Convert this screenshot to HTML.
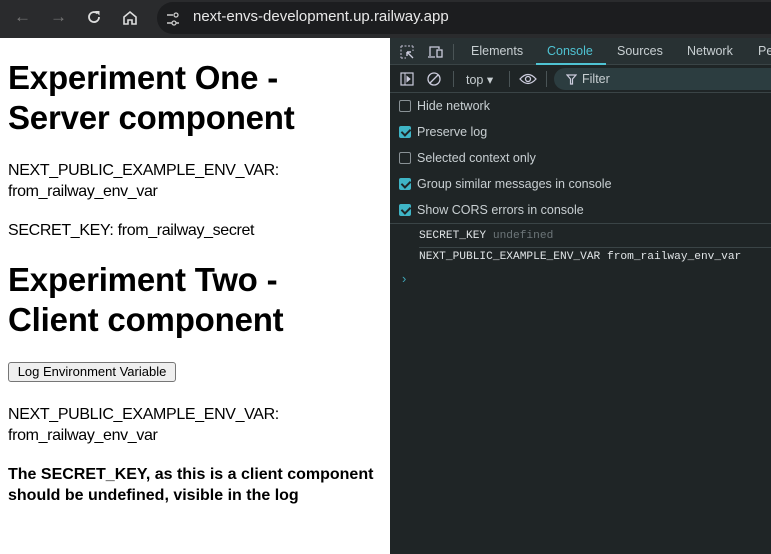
<!DOCTYPE html><html><head><style>
*{margin:0;padding:0;box-sizing:border-box}
body{width:771px;height:554px;overflow:hidden;background:#fff;font-family:"Liberation Sans",sans-serif;position:relative}
.a{position:absolute;white-space:nowrap}
.top{position:absolute;left:0;top:0;width:771px;height:38px;background:#2a2b2d}
.url{position:absolute;left:157px;top:2px;width:640px;height:32px;border-radius:16px;background:#1c1d1f}
h1{position:absolute;left:8px;font-size:33px;line-height:40px;font-weight:bold;color:#000;letter-spacing:-0.2px}
.t{position:absolute;left:8px;font-size:16px;line-height:21px;color:#000;letter-spacing:-0.35px}
.dt{position:absolute;left:390px;top:38px;width:381px;height:516px;background:#1f2526;color:#c8cfd2;font-size:12.5px}
.cb{position:absolute;left:9px;width:12px;height:12px;border:1px solid #8a9296;border-radius:2px}
.cb.on{background:#3fb5c6;border-color:#3fb5c6}
.cb.on:after{content:"";position:absolute;left:3px;top:0px;width:4px;height:7px;border:solid #1f2526;border-width:0 2px 2px 0;transform:rotate(45deg)}
.mono{font-family:"Liberation Mono",monospace;font-size:11.2px}
</style></head><body>
<div class="top">
<div class="a" style="left:14px;top:7px;color:#777;font-size:17px">←</div>
<div class="a" style="left:50px;top:7px;color:#777;font-size:17px">→</div>
<svg class="a" style="left:86px;top:9px" width="16" height="16" viewBox="0 0 16 16"><path d="M13 8A5 5 0 1 1 11.5 4.5" fill="none" stroke="#ddd" stroke-width="1.8"/><path d="M9 2H13.5V6.5Z" fill="#ddd"/></svg>
<svg class="a" style="left:122px;top:10px" width="16" height="16" viewBox="0 0 16 16"><path d="M2 7 L8 2 L14 7 V14 H10 V10 H6 V14 H2 Z" fill="none" stroke="#ddd" stroke-width="1.6"/></svg>
<div class="url"></div>
<svg class="a" style="left:166px;top:12px" width="14" height="14" viewBox="0 0 14 14"><path d="M1 3H7M1 11H6M10 11H13" stroke="#ccc" stroke-width="1.4"/><circle cx="10" cy="3" r="2" fill="none" stroke="#ccc" stroke-width="1.3"/><circle cx="8" cy="11" r="2" fill="none" stroke="#ccc" stroke-width="1.3"/></svg>
<div class="a" style="left:193px;top:8px;color:#e8e8e8;font-size:15px">next-envs-development.up.railway.app</div>
</div>

<h1 style="top:58px">Experiment One -<br>Server component</h1>
<div class="t" style="top:160px">NEXT_PUBLIC_EXAMPLE_ENV_VAR:<br>from_railway_env_var</div>
<div class="t" style="top:220px">SECRET_KEY: from_railway_secret</div>
<h1 style="top:260px">Experiment Two -<br>Client component</h1>
<div class="a" style="left:8px;top:362px;width:168px;height:20px;border:1px solid #767676;border-radius:3px;background:#efefef;font-size:13px;line-height:18px;text-align:center;color:#000">Log Environment Variable</div>
<div class="t" style="top:404px">NEXT_PUBLIC_EXAMPLE_ENV_VAR:<br>from_railway_env_var</div>
<div class="t" style="top:464px;font-weight:bold;letter-spacing:0">The SECRET_KEY, as this is a client component<br>should be undefined, visible in the log</div>

<div class="dt">
<div class="a" style="left:0;top:0;width:381px;height:27px;background:#283133;border-bottom:1px solid #3a4446"></div>
<svg class="a" style="left:10px;top:7px" width="14" height="14" viewBox="0 0 14 14"><path d="M1 1H13M1 1V13M1 13H6M13 1V6" stroke="#aab" stroke-width="1.2" stroke-dasharray="2 1.5" fill="none"/><path d="M7 7L13 13M7 7H11M7 7V11" stroke="#ccd" stroke-width="1.4" fill="none"/></svg>
<svg class="a" style="left:37px;top:7px" width="16" height="14" viewBox="0 0 16 14"><path d="M3 11V2H12V4M1 12H8" stroke="#ccd" stroke-width="1.3" fill="none"/><rect x="10" y="5" width="5" height="7" fill="none" stroke="#ccd" stroke-width="1.3"/></svg>
<div class="a" style="left:63px;top:6px;width:1px;height:16px;background:#4a5456"></div>
<div class="a" style="left:81px;top:6px">Elements</div>
<div class="a" style="left:157px;top:6px;color:#4fc3d3">Console</div>
<div class="a" style="left:146px;top:25px;width:70px;height:2px;background:#4fc3d3"></div>
<div class="a" style="left:227px;top:6px">Sources</div>
<div class="a" style="left:297px;top:6px">Network</div>
<div class="a" style="left:368px;top:6px">Pe</div>
<div class="a" style="left:0;top:27px;width:381px;height:28px;border-bottom:1px solid #3a4446"></div>
<svg class="a" style="left:10px;top:34px" width="14" height="14" viewBox="0 0 14 14"><rect x="1" y="1" width="12" height="12" fill="none" stroke="#ccd" stroke-width="1.2"/><path d="M5 1V13M7 4.5L10 7L7 9.5Z" stroke="#ccd" fill="#ccd" stroke-width="1"/></svg>
<svg class="a" style="left:37px;top:34px" width="14" height="14" viewBox="0 0 14 14"><circle cx="7" cy="7" r="6" fill="none" stroke="#ccd" stroke-width="1.3"/><path d="M3 11L11 3" stroke="#ccd" stroke-width="1.3"/></svg>
<div class="a" style="left:63px;top:33px;width:1px;height:16px;background:#4a5456"></div>
<div class="a" style="left:76px;top:34px">top ▾</div>
<div class="a" style="left:119px;top:33px;width:1px;height:16px;background:#4a5456"></div>
<svg class="a" style="left:129px;top:35px" width="18" height="12" viewBox="0 0 18 12"><path d="M1 6Q9 -3 17 6Q9 15 1 6Z" fill="none" stroke="#ccd" stroke-width="1.3"/><circle cx="9" cy="6" r="2.5" fill="none" stroke="#ccd" stroke-width="1.3"/></svg>
<div class="a" style="left:156px;top:33px;width:1px;height:16px;background:#4a5456"></div>
<div class="a" style="left:164px;top:30px;width:230px;height:22px;border-radius:11px;background:#2c3d40"></div>
<svg class="a" style="left:176px;top:36px" width="11" height="11" viewBox="0 0 11 11"><path d="M1 1H10L6.5 5V10H4.5V5Z" fill="none" stroke="#ccd" stroke-width="1.2"/></svg>
<div class="a" style="left:192px;top:34px">Filter</div>
<div class="cb" style="top:62px"></div><div class="a" style="left:27px;top:61px">Hide network</div>
<div class="cb on" style="top:88px"></div><div class="a" style="left:27px;top:87px">Preserve log</div>
<div class="cb" style="top:114px"></div><div class="a" style="left:27px;top:113px">Selected context only</div>
<div class="cb on" style="top:140px"></div><div class="a" style="left:27px;top:139px">Group similar messages in console</div>
<div class="cb on" style="top:166px"></div><div class="a" style="left:27px;top:165px">Show CORS errors in console</div>
<div class="a" style="left:0;top:185px;width:381px;height:1px;background:#3a4446"></div>
<div class="a mono" style="left:29px;top:192px;color:#e0e4e6">SECRET_KEY <span style="color:#6d7679">undefined</span></div>
<div class="a" style="left:29px;top:209px;width:352px;height:1px;background:#3a4446"></div>
<div class="a mono" style="left:29px;top:213px;color:#e0e4e6">NEXT_PUBLIC_EXAMPLE_ENV_VAR from_railway_env_var</div>
<div class="a" style="left:12px;top:233px;color:#3fa5b6;font-size:13px">›</div>
</div>
</body></html>
